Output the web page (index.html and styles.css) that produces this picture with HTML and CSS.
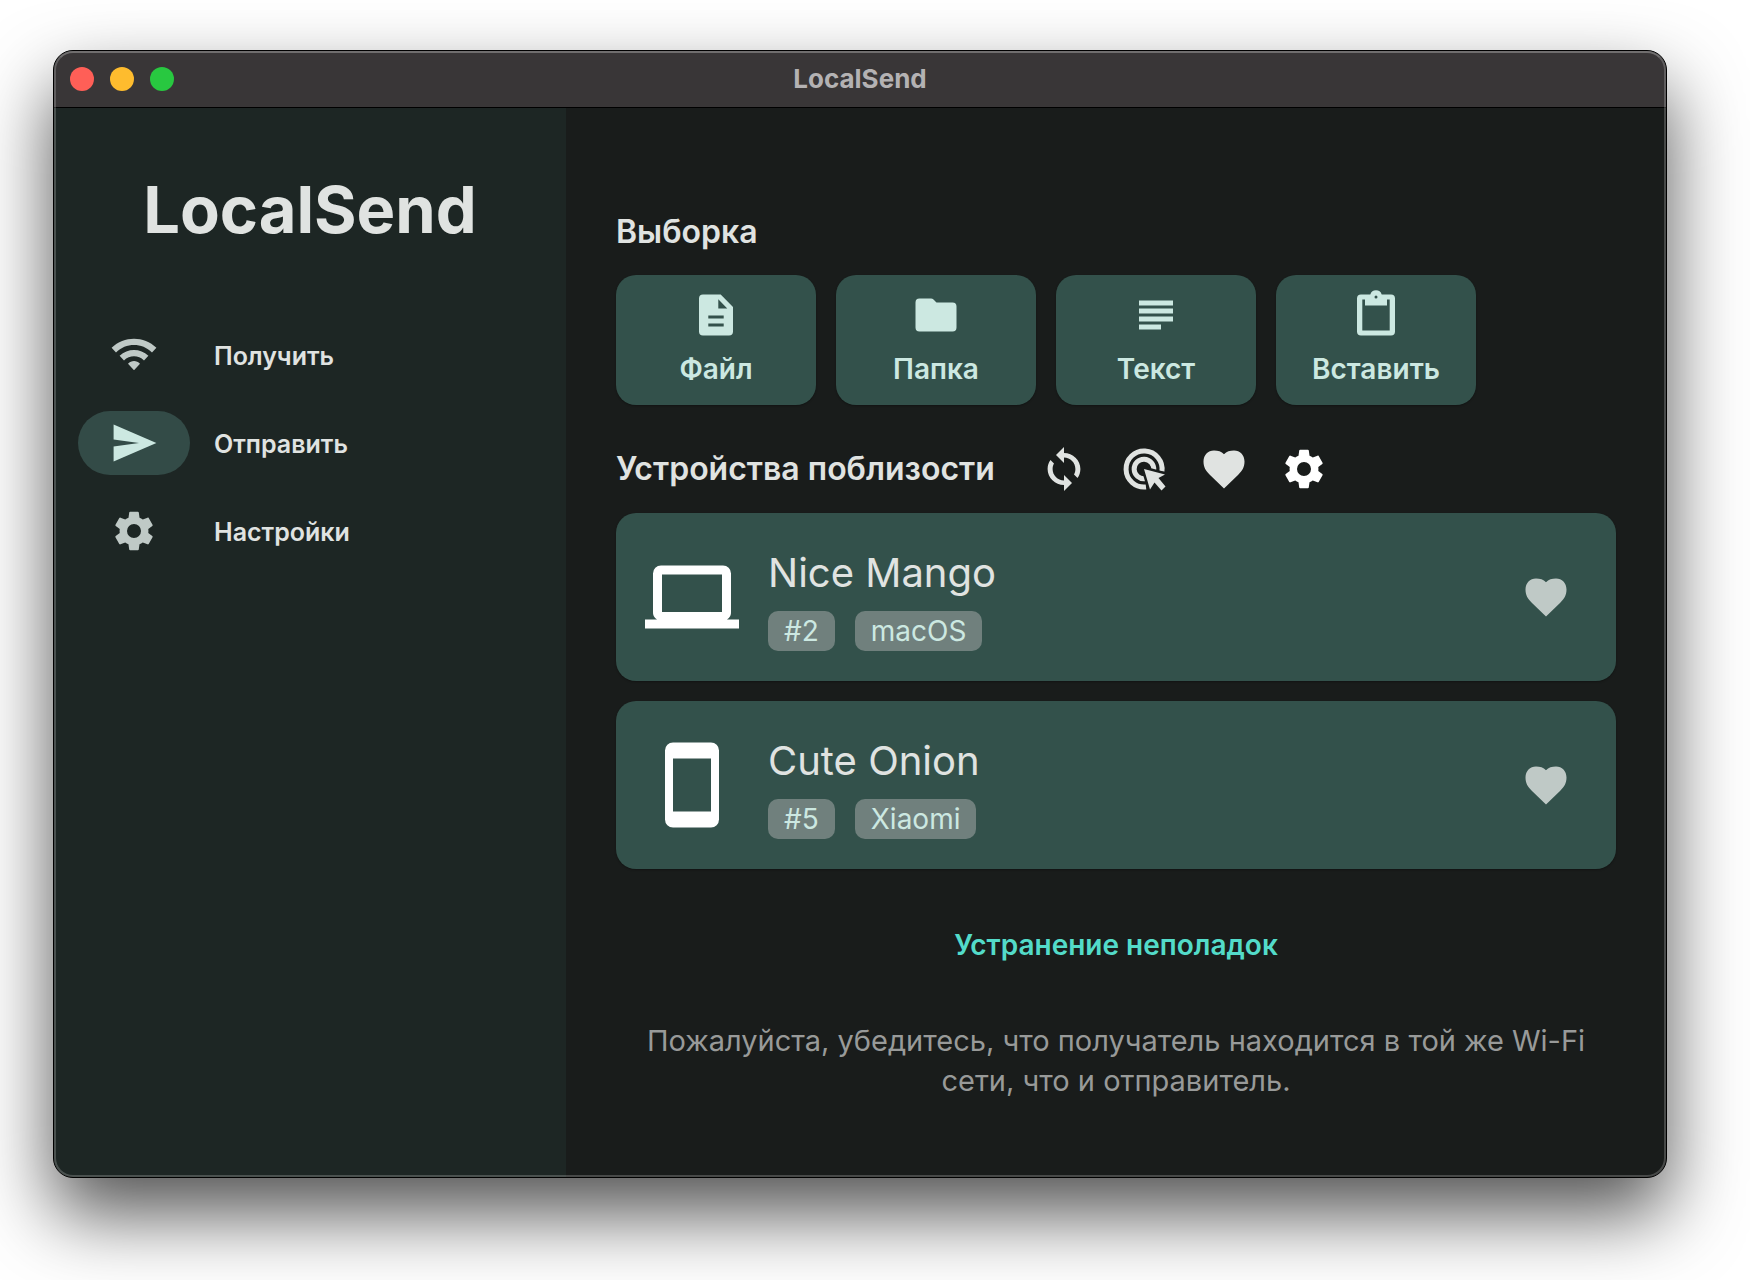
FILE: index.html
```html
<!DOCTYPE html>
<html lang="ru">
<head>
<meta charset="utf-8">
<title>LocalSend</title>
<link rel="stylesheet" href="styles.css">
</head>
<body>
<svg class="sprite" aria-hidden="true">
  <symbol id="gear" viewBox="0 0 24 24"><path d="M19.14 12.94c.04-.3.06-.61.06-.94 0-.32-.02-.64-.07-.94l2.03-1.58c.18-.14.23-.41.12-.61l-1.92-3.32c-.12-.22-.37-.29-.59-.22l-2.39.96c-.5-.38-1.03-.7-1.62-.94l-.36-2.54c-.04-.24-.24-.41-.48-.41h-3.84c-.24 0-.43.17-.47.41l-.36 2.54c-.59.24-1.13.57-1.62.94l-2.39-.96c-.22-.08-.47 0-.59.22L2.74 8.87c-.12.21-.08.47.12.61l2.03 1.58c-.05.3-.09.63-.09.94s.02.64.07.94l-2.03 1.58c-.18.14-.23.41-.12.61l1.92 3.32c.12.22.37.29.59.22l2.39-.96c.5.38 1.03.7 1.62.94l.36 2.54c.05.24.24.41.48.41h3.84c.24 0 .44-.17.47-.41l.36-2.54c.59-.24 1.13-.56 1.62-.94l2.39.96c.22.08.47 0 .59-.22l1.92-3.32c.12-.22.07-.47-.12-.61l-2.01-1.58zM12 15.5a3.5 3.5 0 1 1 0-7 3.5 3.5 0 0 1 0 7z"/></symbol>
  <symbol id="heart" viewBox="-24 -24 48 48"><path d="M0 19.500L-14 6C-18.500 1.500-20.500-2-20.500-7.500C-20.500-14-16-18.500-10-18.500C-6-18.500-2.500-17.500 0-14.700C2.500-17.500 6-18.500 10-18.500C16-18.500 20.500-14 20.500-7.500C20.500-2 18.500 1.500 14 6Z"/></symbol>
</svg>
<div class="window">
  <header class="titlebar">
    <div class="lights">
      <button class="light light-close" aria-label="Закрыть"></button>
      <button class="light light-minimize" aria-label="Свернуть"></button>
      <button class="light light-zoom" aria-label="Развернуть"></button>
    </div>
    <span class="titlebar-text">LocalSend</span>
  </header>
  <div class="body">
    <aside class="sidebar">
      <h1 class="brand">LocalSend</h1>
      <nav class="nav">
        <a class="nav-item" href="#receive">
          <span class="nav-pill"><svg class="icon" viewBox="0 0 24 24"><path d="M.8 8.400l2.200 2.300c4.970-4.970 13.030-4.970 18 0l2.200-2.300C16.930 2.330 7.080 2.330.8 8.400zm8.200 8l3 3.200 3-3.200c-1.650-1.860-4.340-1.860-6 0zm-4.200-4l2.200 2.300c2.760-2.760 7.240-2.760 10 0l2.200-2.300C15.140 8.540 8.870 8.540 4.800 12.400z"/></svg></span>
          <span class="nav-label">Получить</span>
        </a>
        <a class="nav-item nav-active" href="#send" aria-current="page">
          <span class="nav-pill"><svg class="icon" viewBox="0 0 24 24"><path d="M1.800 21.200L23.200 12 1.800 2.800V10.200L14.500 12 1.800 13.800z"/></svg></span>
          <span class="nav-label">Отправить</span>
        </a>
        <a class="nav-item" href="#settings">
          <span class="nav-pill"><svg class="icon"><use href="#gear"/></svg></span>
          <span class="nav-label">Настройки</span>
        </a>
      </nav>
    </aside>
    <main class="main">
      <h2 class="heading">Выборка</h2>
      <div class="sources">
        <button class="source">
          <svg class="icon" viewBox="-24 -24 48 48"><path fill-rule="evenodd" d="M-13-20.500H4.700L17-8V16.500a4 4 0 0 1-4 4H-13a4 4 0 0 1-4-4V-16.500a4 4 0 0 1 4-4zM2.300-15.800V-6.500H11.300zM-7.700.5V3.500H7.700V.5zM-7.700 8.500V11.500H7.700V8.500z"/></svg>
          Файл
        </button>
        <button class="source">
          <svg class="icon" viewBox="-24 -24 48 48"><path d="M-16.500-16.500H-5Q-3.500-16.500-2.500-15.500L.5-12.500H16.500a4 4 0 0 1 4 4V12.500a4 4 0 0 1-4 4H-16.500a4 4 0 0 1-4-4V-12.500a4 4 0 0 1 4-4z"/></svg>
          Папка
        </button>
        <button class="source">
          <svg class="icon" viewBox="-24 -24 48 48"><path d="M-17-14.500H17V-9.500H-17zM-17-6.500H17V-1.500H-17zM-17 1.500H17V6.500H-17zM-17 9.500H5V14.500H-17z"/></svg>
          Текст
        </button>
        <button class="source">
          <svg class="icon icon-overflow" viewBox="-24 -24 48 48"><path fill-rule="evenodd" d="M-15-20.500H-5.700A6 6 0 0 1 5.700-20.500H15a4 4 0 0 1 4 4V16.500a4 4 0 0 1-4 4H-15a4 4 0 0 1-4-4V-16.500a4 4 0 0 1 4-4zM-13.700-15.500V15.500H13.700V-15.500H11V-9.500H-11V-15.500zM0-19.500a1.500 1.500 0 1 0 0 3 1.500 1.500 0 0 0 0-3z"/></svg>
          Вставить
        </button>
      </div>
      <div class="nearby">
        <h2 class="heading">Устройства поблизости</h2>
        <div class="tools">
          <button class="tool" aria-label="Сканировать"><svg class="icon" viewBox="0 0 24 24"><path d="M12 4V1L8 5l4 4V6.300c3.200 0 5.700 2.600 5.700 5.700 0 1.010-.25 1.970-.7 2.700l1.760 1.760C19.740 15.230 20.200 13.570 20.200 12c0-4.420-3.780-8-8.200-8zm0 13.700c-3.200 0-5.700-2.600-5.700-5.700 0-1.010.25-1.970.7-2.700L5.240 7.540C4.260 8.770 3.800 10.430 3.800 12c0 4.420 3.780 8 8.200 8v3l4-4-4-4z"/></svg></button>
          <button class="tool" aria-label="Ввести адрес"><svg class="icon" viewBox="-24 -24 48 48"><path fill="none" stroke="currentColor" stroke-width="5" d="M17.900 2.500A18 18 0 1 0 2 17.900M9.700 1A9.800 9.800 0 1 0 1 9.700"/><path class="cursor" d="M0 0L21 5.500 14.500 9 21.500 17.500 17.500 21.500 10.500 13.500 6 20.500z"/></svg></button>
          <button class="tool" aria-label="Избранное"><svg class="icon"><use href="#heart"/></svg></button>
          <button class="tool tool-bright" aria-label="Параметры отправки"><svg class="icon"><use href="#gear"/></svg></button>
        </div>
      </div>
      <ul class="devices">
        <li class="device">
          <svg class="device-icon" viewBox="-48 -48 96 96"><path fill-rule="evenodd" d="M-31-31.500H31a8 8 0 0 1 8 8V15a8 8 0 0 1-4 7.500H47V31.500H-47V22.500H-35A8 8 0 0 1-39 15V-23.500a8 8 0 0 1 8-8zM-30-22.500V15H30V-22.500z"/></svg>
          <div class="device-info">
            <h3 class="device-name">Nice Mango</h3>
            <div class="badges"><span class="badge">#2</span><span class="badge">macOS</span></div>
          </div>
          <button class="tool tool-muted" aria-label="В избранное"><svg class="icon"><use href="#heart"/></svg></button>
        </li>
        <li class="device">
          <svg class="device-icon" viewBox="-48 -48 96 96"><path fill-rule="evenodd" d="M-19-42.500H19a8 8 0 0 1 8 8V34.500a8 8 0 0 1-8 8H-19a8 8 0 0 1-8-8V-34.500a8 8 0 0 1 8-8zM-19-26.500V26.500H19V-26.500z"/></svg>
          <div class="device-info">
            <h3 class="device-name">Cute Onion</h3>
            <div class="badges"><span class="badge">#5</span><span class="badge">Xiaomi</span></div>
          </div>
          <button class="tool tool-muted" aria-label="В избранное"><svg class="icon"><use href="#heart"/></svg></button>
        </li>
      </ul>
      <button class="troubleshoot">Устранение неполадок</button>
      <p class="hint">Пожалуйста, убедитесь, что получатель находится в той же Wi-Fi сети, что и отправитель.</p>
    </main>
  </div>
</div>
</body>
</html>
```

FILE: styles.css
```css
* {
  box-sizing: border-box;
  margin: 0;
}

body {
  min-height: 100vh;
  padding: 50px 83px 102px 53px;
  background: #fff;
  color: #e0e3e1;
  font-family: Inter, "Liberation Sans", sans-serif;
  font-size: 28px;
  line-height: 40px;
  display: flex;
}

button {
  border: 0;
  padding: 0;
  background: none;
  color: inherit;
  font: inherit;
  cursor: pointer;
}

.sprite {
  display: none;
}

.icon {
  display: block;
  flex: none;
  width: 48px;
  height: 48px;
  fill: currentColor;
}

.icon-overflow {
  overflow: visible;
}

/* Window frame */
.window {
  position: relative;
  flex: 1;
  display: flex;
  flex-direction: column;
  border: 1px solid #000;
  border-radius: 20px;
  background: #191c1b;
  box-shadow: 0 36px 76px rgba(0, 0, 0, 0.68);
}

.window::after {
  content: "";
  position: absolute;
  inset: 0;
  border: 2px solid rgba(255, 255, 255, 0.2);
  border-top-color: rgba(255, 255, 255, 0.28);
  border-radius: 19px;
  pointer-events: none;
}

.titlebar {
  display: grid;
  grid-template-columns: 1fr auto 1fr;
  align-items: center;
  height: 57px;
  padding: 0 16px;
  border-bottom: 1px solid #000;
  border-radius: 19px 19px 0 0;
  background: #393637;
}

.lights {
  display: flex;
  gap: 16px;
}

.light {
  width: 24px;
  height: 24px;
  border-radius: 50%;
}

.light-close {
  background: #ff5f57;
}

.light-minimize {
  background: #febc2e;
}

.light-zoom {
  background: #28c840;
}

.titlebar-text {
  color: #b4b2b3;
  font-size: 26px;
  font-weight: 700;
}

.body {
  flex: 1;
  display: grid;
  grid-template-columns: 512px 1fr;
}

/* Sidebar */
.sidebar {
  padding: 62px 24px;
  border-radius: 0 0 0 19px;
  background: #1d2624;
}

.brand {
  font-size: 65px;
  line-height: 80px;
  font-weight: 700;
  text-align: center;
}

.nav {
  display: grid;
  gap: 24px;
  margin-top: 73px;
}

.nav-item {
  display: flex;
  align-items: center;
  gap: 24px;
  color: inherit;
  font-size: 25px;
  font-weight: 600;
  text-decoration: none;
}

.nav-label {
  padding-top: 2px;
}

.nav-pill {
  display: grid;
  place-items: center;
  width: 112px;
  height: 64px;
  border-radius: 32px;
  color: #bfc9c6;
}

.nav-active .nav-pill {
  background: #334b47;
  color: #cce8e1;
}

/* Main pane */
.main {
  padding: 104px 50px 72px;
}

.heading {
  font-size: 32px;
  line-height: 40px;
  font-weight: 600;
}

.sources {
  display: flex;
  flex-wrap: wrap;
  gap: 20px;
  margin: 23px 0 24px;
}

.source {
  display: flex;
  flex-direction: column;
  align-items: center;
  gap: 10px;
  width: 200px;
  padding: 16px 0;
  border-radius: 20px;
  background: #33514b;
  box-shadow: 0 1px 2px rgba(0, 0, 0, 0.3);
  color: #cce8e1;
  font-weight: 600;
}

.nearby {
  display: flex;
  align-items: center;
  gap: 29px;
  margin-bottom: 4px;
}

.tools {
  display: flex;
}

.tool {
  display: grid;
  place-items: center;
  width: 80px;
  height: 80px;
}

.tool-bright {
  color: #fff;
}

.tool-muted {
  color: #bfc9c6;
}

.cursor {
  stroke: #191c1b;
  stroke-width: 5px;
  paint-order: stroke;
}

.devices {
  display: grid;
  gap: 20px;
  padding: 0;
  list-style: none;
}

.device {
  display: flex;
  align-items: center;
  min-height: 168px;
  padding: 0 30px 0 28px;
  border-radius: 20px;
  background: #33514b;
  box-shadow: 0 1px 2px rgba(0, 0, 0, 0.3);
}

.device-icon {
  width: 96px;
  height: 96px;
  fill: #fff;
}

.device-info {
  flex: 1;
  margin-left: 28px;
  padding-top: 6px;
}

.device-name {
  font-size: 40px;
  line-height: 48px;
  font-weight: 400;
}

.badges {
  display: flex;
  gap: 20px;
  margin-top: 14px;
}

.badge {
  padding: 0 16px;
  border-radius: 10px;
  background: #70807d;
  color: #cce8e1;
}

.troubleshoot {
  display: block;
  height: 80px;
  margin: 36px auto;
  color: #53dbc9;
  font-weight: 600;
}

.hint {
  padding: 0 30px;
  color: #989a99;
  font-size: 29px;
  text-align: center;
}
```
